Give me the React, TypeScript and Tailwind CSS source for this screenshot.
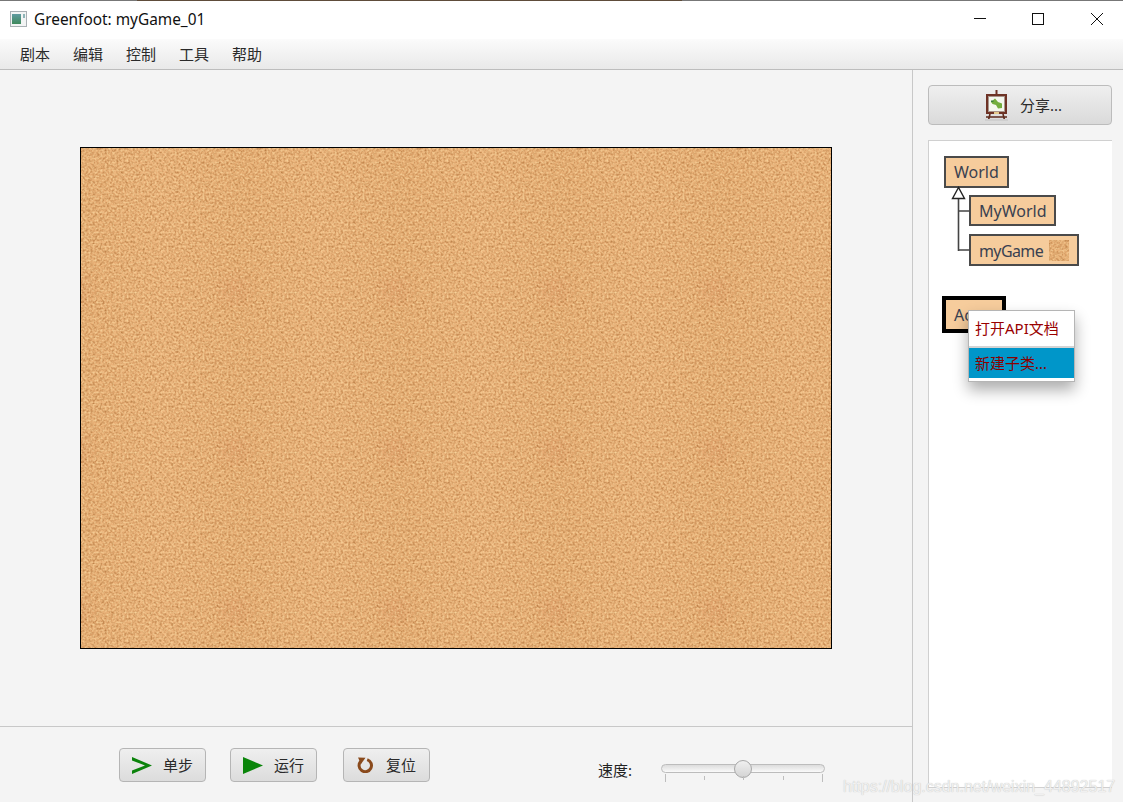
const uiFont = { fontFamily: '"Noto Sans", "Noto Sans CJK SC", sans-serif' };

const menus = ["剧本", "编辑", "控制", "工具", "帮助"];

// Title bar — window icon + title on the left, min/max/close on the right.
function TitleBar() {
  return (
    <div className="flex h-[38px] items-center bg-white pb-[1px] pl-[10px]">
      <svg width="17" height="16" viewBox="0 0 17 16" className="-mt-[1px]">
        <rect x="0.5" y="0.5" width="16" height="15" fill="#f2f4f4" stroke="#a9b0b4" />
        <defs>
          <linearGradient id="winIcon" x1="0" y1="0" x2="0" y2="1">
            <stop offset="0" stopColor="#5f9aa0" />
            <stop offset="1" stopColor="#3f8a5c" />
          </linearGradient>
        </defs>
        <rect x="2" y="3" width="9" height="10" fill="url(#winIcon)" />
        <rect x="13" y="3" width="2" height="4" fill="#8fb5b8" />
      </svg>
      <span className="ml-[7px] text-[15.4px] text-[#101010]">Greenfoot: myGame_01</span>
      <div className="-mt-[1px] ml-auto flex items-center">
        <svg width="60" height="16" viewBox="0 0 60 16">
          <path d="M30 7.5h12" stroke="#111" strokeWidth="1" />
        </svg>
        <svg width="59" height="16" viewBox="0 0 59 16">
          <rect x="28.5" y="2.5" width="11" height="11" fill="none" stroke="#111" />
        </svg>
        <svg width="60" height="16" viewBox="0 0 60 16">
          <path d="M28 2l12 12M40 2L28 14" stroke="#111" strokeWidth="1" />
        </svg>
      </div>
    </div>
  );
}

function MenuBar() {
  return (
    <div className="flex h-[31px] items-center gap-[23px] border-b border-[#bdbdbd] bg-gradient-to-b from-[#fbfbfb] to-[#e9e9e9] pl-[20px] text-[15px] text-[#2a2a2a]">
      {menus.map((m) => (
        <span key={m}>{m}</span>
      ))}
    </div>
  );
}

// Cork texture: turbulence tile repeated so the faint bands and blotches of the original show.
function Cork() {
  return (
    <svg width="750" height="500" className="block">
      <defs>
        <filter id="corkNoise" x="0" y="0" width="100%" height="100%" colorInterpolationFilters="sRGB">
          <feTurbulence type="fractalNoise" baseFrequency="0.42" numOctaves="2" seed="7" stitchTiles="stitch" />
          <feColorMatrix
            type="matrix"
            values="0 0 0 0 0.7  0 0 0 0 0.46  0 0 0 0 0.24  1.7 0 0 0 -0.62"
          />
        </filter>
        <filter id="corkLight" x="0" y="0" width="100%" height="100%" colorInterpolationFilters="sRGB">
          <feTurbulence type="fractalNoise" baseFrequency="0.5" numOctaves="2" seed="21" stitchTiles="stitch" />
          <feColorMatrix
            type="matrix"
            values="0 0 0 0 0.98  0 0 0 0 0.84  0 0 0 0 0.62  0 1.9 0 0 -0.75"
          />
        </filter>
        <linearGradient id="corkBand" x1="0" y1="0" x2="1" y2="0">
          <stop offset="0" stopColor="#e7ae74" />
          <stop offset="0.5" stopColor="#ecb47c" />
          <stop offset="1" stopColor="#e7ae74" />
        </linearGradient>
        <radialGradient id="corkBlotch">
          <stop offset="0" stopColor="#d6845a" stopOpacity="0.28" />
          <stop offset="1" stopColor="#d6845a" stopOpacity="0" />
        </radialGradient>
        <pattern id="corkTile" width="160" height="160" patternUnits="userSpaceOnUse">
          <rect width="160" height="160" fill="url(#corkBand)" />
          <circle cx="154" cy="142" r="24" fill="url(#corkBlotch)" />
          <circle cx="-6" cy="142" r="24" fill="url(#corkBlotch)" />
          <rect width="160" height="160" filter="url(#corkNoise)" />
          <rect width="160" height="160" filter="url(#corkLight)" />
        </pattern>
      </defs>
      <rect width="750" height="500" fill="url(#corkTile)" />
    </svg>
  );
}

function ToolButton({
  icon,
  label,
  className,
  labelClass,
}: {
  icon: React.ReactNode;
  label: string;
  className?: string;
  labelClass?: string;
}) {
  return (
    <button
      className={`flex h-[34px] w-[87px] items-center rounded-[4px] border border-[#b5b5b5] bg-gradient-to-b from-[#efefef] to-[#dcdcdc] text-[15px] text-[#2a2a2a] ${className ?? ""}`}
    >
      <span className="flex w-[43px] shrink-0 justify-center">{icon}</span>
      <span className={labelClass}>{label}</span>
    </button>
  );
}

function StepIcon() {
  return (
    <svg width="20" height="17" viewBox="0 0 20 17">
      <path d="M0 0L20 8.5L0 17V13.6L13 8.5L0 3.4Z" fill="#0b830b" />
    </svg>
  );
}

function RunIcon() {
  return (
    <svg width="20" height="17" viewBox="0 0 20 17">
      <path d="M0 0L20 8.5L0 17Z" fill="#0a850a" />
    </svg>
  );
}

function ResetIcon() {
  return (
    <svg width="16" height="16" viewBox="0 0 16 16" className="-ml-[2px]">
      <path d="M3.8 4.2A6.2 6.2 0 1 0 10.2 2.6" fill="none" stroke="#8a4a1c" strokeWidth="3" />
      <path d="M1 0.5L8.5 0.8L4 7Z" fill="#8a4a1c" />
    </svg>
  );
}

function Slider() {
  const ticks = [4, 43, 82, 122, 161];
  return (
    <div className="relative h-[24px] w-[164px]">
      <div className="h-[9px] rounded-full border border-[#bcbcbc] bg-gradient-to-b from-[#dcdcdc] to-[#fafafa]" />
      <div className="absolute left-[73px] top-[-4px] h-[18px] w-[18px] rounded-full border border-[#a8a8a8] bg-gradient-to-b from-[#f0f0f0] to-[#d4d4d4]" />
      {ticks.map((t, i) => (
        <div
          key={t}
          className="absolute w-px bg-[#bdbdbd]"
          style={{ left: t, top: i === 0 || i === 4 ? 10 : 12, height: i === 0 || i === 4 ? 8 : 4 }}
        />
      ))}
    </div>
  );
}

function ShareIcon() {
  return (
    <svg width="26" height="31" viewBox="0 0 26 31">
      <path d="M6 24L4.5 30M19 24L20.5 30M2 27H23" stroke="#5e2a1c" strokeWidth="1.6" fill="none" />
      <rect x="1" y="29" width="23" height="2" fill="#cfcfcf" />
      <rect x="11.5" y="0" width="2" height="5" fill="#6e3326" />
      <rect x="2" y="4" width="21" height="20" fill="#6e3326" />
      <rect x="4" y="6" width="17" height="16" fill="#a9958c" />
      <rect x="5" y="7" width="15" height="14" fill="#f4f7ee" />
      <path d="M7 12L11 8.5L14 12L18 13.5V18L14 18.5L12 15L8.5 14Z" fill="#74ae3e" />
      <rect x="7" y="10.5" width="2.5" height="1.5" fill="#3d7f3d" />
      <rect x="10" y="22" width="5" height="2" fill="#e5c98a" />
    </svg>
  );
}

function ClassBox({ children, className }: { children: React.ReactNode; className?: string }) {
  return (
    <div
      className={`flex items-center border-2 border-[#4a4a4a] bg-[#f6cc9c] pl-[8px] text-[16px] text-[#3a4150] ${className ?? ""}`}
    >
      {children}
    </div>
  );
}

function ClassPanel() {
  return (
    <div className="relative flex-1 border-b border-l border-t border-[#d0d0d0] bg-white pl-[15px] pt-[15px]">
      <ClassBox className="h-[32px] w-[65px]">World</ClassBox>
      {/* inheritance arrow and branches */}
      <svg width="30" height="66" viewBox="0 0 30 66" className="absolute left-[20px] top-[45px]">
        <path d="M9.5 12V65M9.5 25H21M9.5 64H21" fill="none" stroke="#444" strokeWidth="1.6" />
        <path d="M9.5 1.5L3.5 12.5H15.5Z" fill="#fff" stroke="#222" strokeWidth="1.4" />
      </svg>
      <ClassBox className="ml-[25px] mt-[7px] h-[31px] w-[87px]">MyWorld</ClassBox>
      <ClassBox className="ml-[25px] mt-[8px] h-[32px] w-[110px]">
        <span className="pt-[1px] tracking-[-0.6px]">myGame</span>
        <div className="ml-[6px] h-[21px] w-[20px] overflow-hidden">
          <svg width="20" height="21">
            <rect width="20" height="21" fill="url(#corkTile)" />
          </svg>
        </div>
      </ClassBox>
      <ClassBox className="ml-[-2px] mt-[30px] h-[37px] w-[64px] !border-[4px] !border-black">Actor</ClassBox>

      {/* context menu over the Actor box */}
      <div className="absolute left-[39px] top-[169px] w-[107px] border border-[#b5b5b5] bg-white pb-[3px] text-[15px] text-[#990000] shadow-[0_8px_14px_rgba(0,0,0,0.32)]">
        <div className="flex h-[35px] items-center pl-[6px]">打开API文档</div>
        <div className="h-[2px] bg-[#d4d4d4]" />
        <div className="flex h-[30px] items-center bg-[#0096c9] pl-[6px] text-[#8a0000]">新建子类...</div>
      </div>
    </div>
  );
}

export default function App() {
  return (
    <div className="relative flex h-[802px] w-[1123px] flex-col overflow-hidden bg-[#f4f4f4]" style={uiFont}>
      <div className="flex h-px">
        <div className="w-[137px] bg-[#777]" />
        <div className="w-[545px] bg-[#5e4c3a]" />
        <div className="flex-1 bg-[#777]" />
      </div>
      <TitleBar />
      <MenuBar />
      <div className="flex flex-1">
        <div className="flex w-[912px] flex-col">
          <div className="flex flex-1 items-start pl-[80px] pt-[77px]">
            <div className="border border-black">
              <Cork />
            </div>
          </div>
          <div className="flex h-[76px] items-start border-t border-[#c8c8c8] pl-[119px] pt-[21px]">
            <ToolButton icon={<StepIcon />} label="单步" />
            <ToolButton icon={<RunIcon />} label="运行" className="ml-[24px]" />
            <ToolButton icon={<ResetIcon />} label="复位" className="ml-[26px]" labelClass="-ml-[1px]" />
            <span className="ml-[168px] mt-[11px] text-[15px] text-[#222]">速度:</span>
            <div className="ml-[29px] mt-[16px]">
              <Slider />
            </div>
          </div>
        </div>
        <div className="flex w-[211px] flex-col border-l border-[#c8c8c8] pb-[14px] pl-[15px] pr-[11px] pt-[15px]">
          <button className="flex h-[40px] items-center rounded-[4px] border border-[#bcbcbc] bg-gradient-to-b from-[#efefef] to-[#dadada] pl-[55px] text-[15px] text-[#2a2a2a]">
            <ShareIcon />
            <span className="ml-[10px]">分享...</span>
          </button>
          <div className="mt-[15px] flex flex-1 flex-col">
            <ClassPanel />
          </div>
        </div>
      </div>
      <div
        className="absolute left-[843px] top-[775px] text-[16px] text-[#f0f0f0] [text-shadow:0_0_1px_#b8b8b8]"
        style={{ fontFamily: '"Liberation Sans", sans-serif' }}
      >
        https://blog.csdn.net/weixin_44892517
      </div>
    </div>
  );
}
